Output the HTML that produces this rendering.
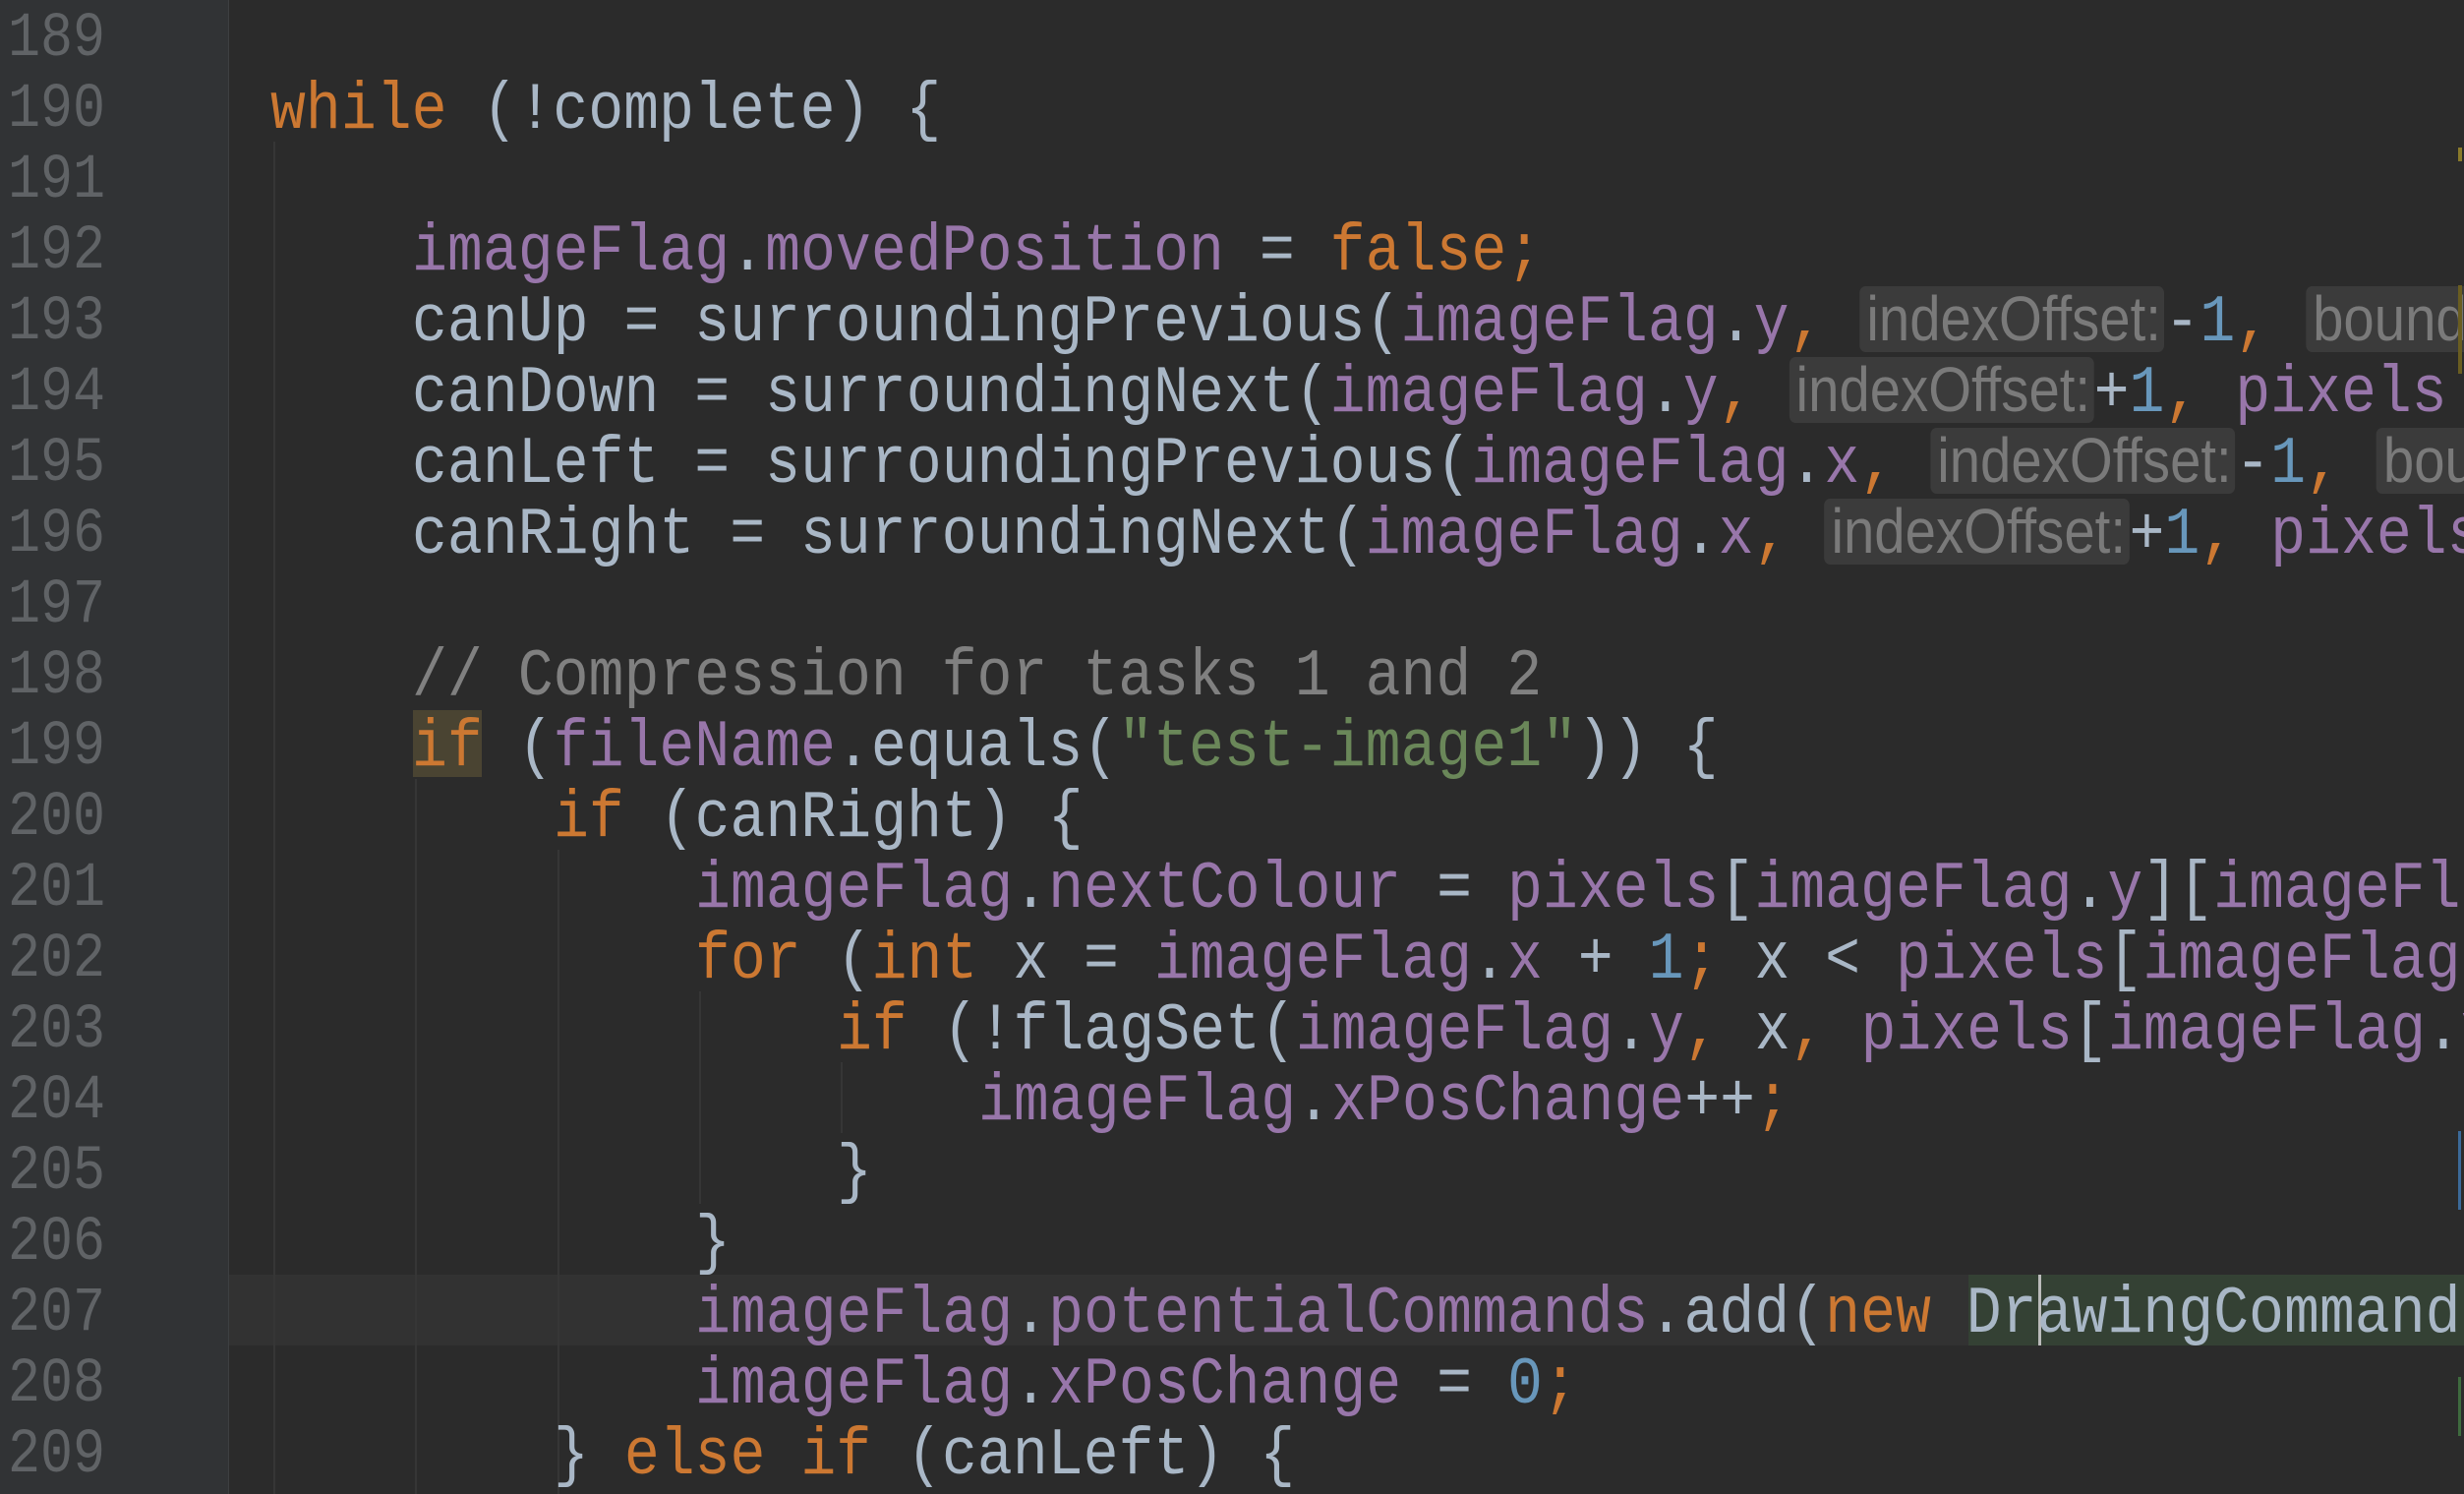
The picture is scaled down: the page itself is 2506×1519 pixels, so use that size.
<!DOCTYPE html>
<html><head><meta charset="utf-8"><style>
html,body{margin:0;padding:0}
body{width:2506px;height:1519px;overflow:hidden;background:#2b2b2b;position:relative;font-family:"Liberation Mono",monospace}
#wrap{position:absolute;left:0;top:0;width:2506px;height:1519px;overflow:hidden}
.gutter{position:absolute;left:0;top:0;width:232px;height:1519px;background:#313335;border-right:1px solid #3d3f41}
.ln{position:absolute;left:8px;height:72px;line-height:72px;font-size:64px;color:#606366;transform:scaleX(0.86);transform-origin:left;white-space:pre;padding-top:4px;box-sizing:border-box}
.l{position:absolute;height:72px;line-height:72px;font-size:68px;color:#a9b7c6;white-space:pre;transform:scaleX(0.88);transform-origin:left;padding-top:5px;box-sizing:border-box}
.k{color:#cc7832}.f{color:#9876aa}.n{color:#6897bb}.s{color:#6a8759}.c{color:#808080}
.h{display:inline-block;font-family:"Liberation Sans",sans-serif;font-size:64px;line-height:67px;height:67px;background:#3b3b3b;color:#7a7a7a;border-radius:7px;padding:0 4px 0 8px;vertical-align:top;margin-top:-2px}
.guide{position:absolute;width:2px;background:#363636}
</style></head><body>
<div id="wrap">
<div class="gutter"></div>
<div style="position:absolute;left:233px;top:1296px;width:2273px;height:72px;background:#323232"></div>
<div class="guide" style="left:278px;top:144px;height:1375px"></div>
<div class="guide" style="left:422px;top:792px;height:727px"></div>
<div class="guide" style="left:567px;top:864px;height:655px"></div>
<div class="guide" style="left:711px;top:1008px;height:216px"></div>
<div class="guide" style="left:855px;top:1080px;height:72px"></div>
<div style="position:absolute;left:420px;top:722px;width:70px;height:68px;background:#4a4432"></div>
<div style="position:absolute;left:2002px;top:1296px;width:504px;height:72px;background:#344134"></div>
<div style="position:absolute;left:2073px;top:1296px;width:3px;height:72px;background:#bbbbbb"></div>

<div class="ln" style="top:0">189</div>
<div class="ln" style="top:72px">190</div>
<div class="ln" style="top:144px">191</div>
<div class="ln" style="top:216px">192</div>
<div class="ln" style="top:288px">193</div>
<div class="ln" style="top:360px">194</div>
<div class="ln" style="top:432px">195</div>
<div class="ln" style="top:504px">196</div>
<div class="ln" style="top:576px">197</div>
<div class="ln" style="top:648px">198</div>
<div class="ln" style="top:720px">199</div>
<div class="ln" style="top:792px">200</div>
<div class="ln" style="top:864px">201</div>
<div class="ln" style="top:936px">202</div>
<div class="ln" style="top:1008px">203</div>
<div class="ln" style="top:1080px">204</div>
<div class="ln" style="top:1152px">205</div>
<div class="ln" style="top:1224px">206</div>
<div class="ln" style="top:1296px">207</div>
<div class="ln" style="top:1368px">208</div>
<div class="ln" style="top:1440px">209</div>

<div class="l" style="left:275px;top:72px"><span class="k">while</span> (!complete) {</div>
<div class="l" style="left:419px;top:216px"><span class="f">imageFlag</span>.<span class="f">movedPosition</span> = <span class="k">false;</span></div>
<div class="l" style="left:419px;top:288px">canUp = surroundingPrevious(<span class="f">imageFlag</span>.<span class="f">y</span><span class="k">,</span> <span class="h">indexOffset:</span>-<span class="n">1</span><span class="k">,</span> <span class="h">boundary:</span></div>
<div class="l" style="left:419px;top:360px">canDown = surroundingNext(<span class="f">imageFlag</span>.<span class="f">y</span><span class="k">,</span> <span class="h">indexOffset:</span>+<span class="n">1</span><span class="k">,</span> <span class="f">pixels</span></div>
<div class="l" style="left:419px;top:432px">canLeft = surroundingPrevious(<span class="f">imageFlag</span>.<span class="f">x</span><span class="k">,</span> <span class="h">indexOffset:</span>-<span class="n">1</span><span class="k">,</span> <span class="h">boundary:</span></div>
<div class="l" style="left:419px;top:504px">canRight = surroundingNext(<span class="f">imageFlag</span>.<span class="f">x</span><span class="k">,</span> <span class="h">indexOffset:</span>+<span class="n">1</span><span class="k">,</span> <span class="f">pixels</span></div>
<div class="l c" style="left:419px;top:648px">// Compression for tasks 1 and 2</div>
<div class="l" style="left:419px;top:720px"><span class="k">if</span> (<span class="f">fileName</span>.equals(<span class="s">"test-image1"</span>)) {</div>
<div class="l" style="left:563px;top:792px"><span class="k">if</span> (canRight) {</div>
<div class="l" style="left:707px;top:864px"><span class="f">imageFlag</span>.<span class="f">nextColour</span> = <span class="f">pixels</span>[<span class="f">imageFlag</span>.<span class="f">y</span>][<span class="f">imageFlag</span>.<span class="f">x</span>]</div>
<div class="l" style="left:707px;top:936px"><span class="k">for</span> (<span class="k">int</span> x = <span class="f">imageFlag</span>.<span class="f">x</span> + <span class="n">1</span><span class="k">;</span> x &lt; <span class="f">pixels</span>[<span class="f">imageFlag</span>.<span class="f">y</span>]</div>
<div class="l" style="left:851px;top:1008px"><span class="k">if</span> (!flagSet(<span class="f">imageFlag</span>.<span class="f">y</span><span class="k">,</span> x<span class="k">,</span> <span class="f">pixels</span>[<span class="f">imageFlag</span>.<span class="f">y</span>]</div>
<div class="l" style="left:995px;top:1080px"><span class="f">imageFlag</span>.<span class="f">xPosChange</span>++<span class="k">;</span></div>
<div class="l" style="left:851px;top:1152px">}</div>
<div class="l" style="left:707px;top:1224px">}</div>
<div class="l" style="left:707px;top:1296px"><span class="f">imageFlag</span>.<span class="f">potentialCommands</span>.add(<span class="k">new</span> DrawingCommand(</div>
<div class="l" style="left:707px;top:1368px"><span class="f">imageFlag</span>.<span class="f">xPosChange</span> = <span class="n">0</span><span class="k">;</span></div>
<div class="l" style="left:563px;top:1440px">} <span class="k">else if</span> (canLeft) {</div>

<div style="position:absolute;left:2500px;top:150px;width:4px;height:14px;background:#8a7a2a"></div>
<div style="position:absolute;left:2500px;top:290px;width:4px;height:90px;background:#6a5d20"></div>
<div style="position:absolute;left:2500px;top:1150px;width:3px;height:80px;background:#3b6a9a"></div>
<div style="position:absolute;left:2500px;top:1400px;width:3px;height:60px;background:#3e6b3e"></div>
</div>
</body></html>
